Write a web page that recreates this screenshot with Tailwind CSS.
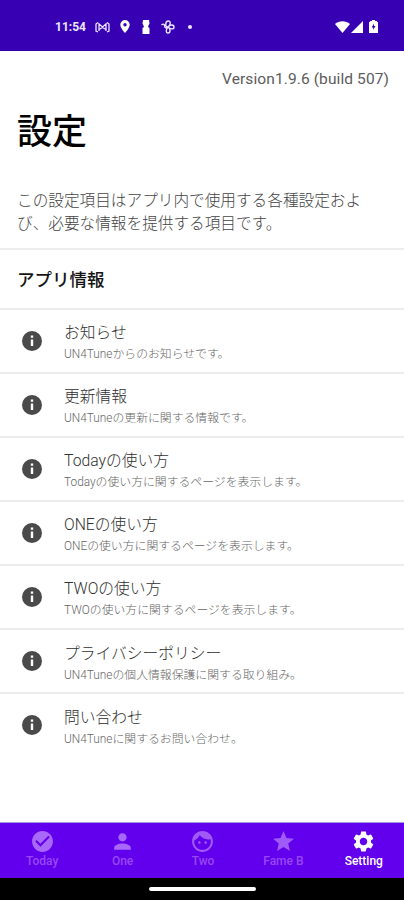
<!DOCTYPE html>
<html lang="ja">
<head>
    <meta charset="UTF-8">
    <meta name="viewport" content="width=device-width, initial-scale=1.0">
    <title>設定</title>
    <script src="https://cdn.jsdelivr.net/npm/@tailwindcss/browser@4"></script>
</head>
<body class="bg-white font-[Roboto,'Noto_Sans_CJK_JP',sans-serif]">
    <svg class="hidden">
        <symbol id="info" viewBox="0 0 24 24"><path d="M12 2a10 10 0 1 0 0 20 10 10 0 0 0 0-20zm1.200 15h-2.400v-6.400h2.400V17zm0-8.200h-2.400V6.600h2.400v2.200z"/></symbol>
    </svg>
    <div class="w-full h-[900px] flex flex-col overflow-hidden">
        <!-- Status bar -->
        <header class="h-[51px] shrink-0 bg-[#3700b3] text-[#ece6ff] flex items-center pl-[55px] pr-[26px] pt-[2px]">
            <span class="w-[32px] text-[12px] leading-none font-bold whitespace-nowrap">11:54</span>
            <svg class="w-[15px] h-3 ml-[8px]" viewBox="0 0 15 12" fill="none" stroke="currentColor" stroke-width="1.3"><path d="M3 1.500 1 3v7l2 1M12 1.500 14 3v7l-2 1M4 10V3l3.500 3L11 3v7M4 8.500l3.500-2 3.500 2"/></svg>
            <svg class="w-[10px] h-[13px] ml-[10px]" viewBox="0 0 10 13" fill="white"><path fill-rule="evenodd" d="M5 0a4.700 4.700 0 0 0-4.700 4.700C.3 8 5 13 5 13s4.700-5 4.700-8.300A4.700 4.700 0 0 0 5 0zm0 3a1.700 1.700 0 1 1 0 3.400A1.700 1.700 0 0 1 5 3z"/></svg>
            <svg class="w-[8px] h-[14px] ml-[12px]" viewBox="0 0 8 14" fill="white"><path d="M1 0h6l.5 3.500L6.500 5.500 6 7l1.500 1v6h-7V8L2 7l-.5-1.500L.5 3.500z"/></svg>
            <svg class="w-[14px] h-[14px] ml-[11px]" viewBox="0 0 14 14" fill="none" stroke="currentColor" stroke-width="1.400"><path d="M7 7C4 7.500 4 1.500 7 1s3 4 0 6zM7 7c2-3 6-2.500 6 0s-3.500 2.500-6 0zM7 7c3 2 2.500 6 0 6s-2-4 0-6zM7 7C5 9 3.500 7.500 3.500 5.500S1.500 4 .5 5"/></svg>
            <span class="size-1 rounded-full bg-[#ece6ff] ml-[13px]"></span>
            <svg class="w-[15px] h-[12px] ml-auto" viewBox="0 0 15 12" fill="white"><path d="M7.500 12 0 3C4 -.7 11-.7 15 3z"/></svg>
            <svg class="w-[12px] h-[12px] ml-[1px]" viewBox="0 0 12 12" fill="white"><path d="M12 0v12H0z"/></svg>
            <svg class="w-[9px] h-[13px] ml-[6px]" viewBox="0 0 9 13"><path fill="white" d="M3 0h3v1h1.500L9 2.500V13H0V2.500L1.500 1H3z"/><path fill="#3700b3" d="M5 3.500 2.700 7.500h1.500V10l2.300-3.900H5z"/></svg>
        </header>

        <main class="flex-1">
            <p class="mt-[17px] pr-[15px] text-right text-[15.500px] leading-[22px] tracking-[0.1px] text-[#5c5c5c]">Version1.9.6 (build 507)</p>
            <h1 class="mt-[18px] pl-[17px] text-[35px] leading-[50px] font-medium text-black">設定</h1>
            <p class="mt-[31px] pl-[17px] text-[15.650px] leading-[23px] font-light text-[#444]">この設定項目はアプリ内で使用する各種設定およ<br>び、必要な情報を提供する項目です。</p>
            <h2 class="mt-[13px] h-[61.500px] border-y-2 border-[#ececec] pl-[17px] pt-[3px] flex items-center text-[17.500px] font-medium text-[#151515]">アプリ情報</h2>

            <ul class="text-[15.750px] font-light text-[#303030] [&>li]:h-[64.1px] [&>li]:border-b-2 [&>li]:border-[#ececec] [&>li:last-child]:border-transparent">
                <li class="flex items-center pl-[20px]">
                    <svg class="size-6 mr-[20px] fill-[#4a4a4a]"><use href="#info"/></svg>
                    <div class="pt-[4px]">
                        <p class="leading-[23px]">お知らせ</p>
                        <p class="text-[11.850px] leading-[20px] text-[#666]">UN4Tuneからのお知らせです。</p>
                    </div>
                </li>
                <li class="flex items-center pl-[20px]">
                    <svg class="size-6 mr-[20px] fill-[#4a4a4a]"><use href="#info"/></svg>
                    <div class="pt-[4px]">
                        <p class="leading-[23px]">更新情報</p>
                        <p class="text-[11.850px] leading-[20px] text-[#666]">UN4Tuneの更新に関する情報です。</p>
                    </div>
                </li>
                <li class="flex items-center pl-[20px]">
                    <svg class="size-6 mr-[20px] fill-[#4a4a4a]"><use href="#info"/></svg>
                    <div class="pt-[4px]">
                        <p class="leading-[23px]">Todayの使い方</p>
                        <p class="text-[11.850px] leading-[20px] text-[#666]">Todayの使い方に関するページを表示します。</p>
                    </div>
                </li>
                <li class="flex items-center pl-[20px]">
                    <svg class="size-6 mr-[20px] fill-[#4a4a4a]"><use href="#info"/></svg>
                    <div class="pt-[4px]">
                        <p class="leading-[23px]">ONEの使い方</p>
                        <p class="text-[11.850px] leading-[20px] text-[#666]">ONEの使い方に関するページを表示します。</p>
                    </div>
                </li>
                <li class="flex items-center pl-[20px]">
                    <svg class="size-6 mr-[20px] fill-[#4a4a4a]"><use href="#info"/></svg>
                    <div class="pt-[4px]">
                        <p class="leading-[23px]">TWOの使い方</p>
                        <p class="text-[11.850px] leading-[20px] text-[#666]">TWOの使い方に関するページを表示します。</p>
                    </div>
                </li>
                <li class="flex items-center pl-[20px]">
                    <svg class="size-6 mr-[20px] fill-[#4a4a4a]"><use href="#info"/></svg>
                    <div class="pt-[4px]">
                        <p class="leading-[23px]">プライバシーポリシー</p>
                        <p class="text-[11.850px] leading-[20px] text-[#666]">UN4Tuneの個人情報保護に関する取り組み。</p>
                    </div>
                </li>
                <li class="flex items-center pl-[20px]">
                    <svg class="size-6 mr-[20px] fill-[#4a4a4a]"><use href="#info"/></svg>
                    <div class="pt-[4px]">
                        <p class="leading-[23px]">問い合わせ</p>
                        <p class="text-[11.850px] leading-[20px] text-[#666]">UN4Tuneに関するお問い合わせ。</p>
                    </div>
                </li>
            </ul>
        </main>

        <!-- Bottom navigation -->
        <nav class="h-[56px] shrink-0 bg-[#6200ee] border-t border-[#a898dc] grid grid-cols-5 pl-[2px] text-[12px] leading-[14px] font-medium text-[#9747f5]">
            <a class="flex flex-col items-center pt-[6px]">
                <svg class="size-[25px] fill-[#a868fa]" viewBox="0 0 24 24"><path d="M12 2C6.480 2 2 6.480 2 12s4.480 10 10 10 10-4.480 10-10S17.520 2 12 2zm-2 15-5-5 1.410-1.410L10 14.170l7.590-7.590L19 8l-9 9z"/></svg>
                Today
            </a>
            <a class="flex flex-col items-center pt-[6px]">
                <svg class="size-[25px] fill-[#a868fa]" viewBox="0 0 24 24"><path d="M12 12c2.210 0 4-1.790 4-4s-1.790-4-4-4-4 1.790-4 4 1.790 4 4 4zm0 2c-2.670 0-8 1.340-8 4v2h16v-2c0-2.660-5.330-4-8-4z"/></svg>
                One
            </a>
            <a class="flex flex-col items-center pt-[6px]">
                <svg class="size-[25px] fill-[#a05af8]" viewBox="0 0 24 24"><path d="M9 11.750c-.69 0-1.250.56-1.250 1.250s.56 1.250 1.250 1.250 1.250-.56 1.250-1.250-.56-1.250-1.250-1.250zm6 0c-.69 0-1.250.56-1.250 1.250s.56 1.250 1.250 1.250 1.250-.56 1.250-1.250-.56-1.250-1.250-1.250zM12 2C6.480 2 2 6.480 2 12s4.480 10 10 10 10-4.480 10-10S17.520 2 12 2zm0 18c-4.410 0-8-3.590-8-8 0-.29.02-.58.05-.86 2.360-1.050 4.230-2.980 5.210-5.370C11.070 8.330 14.050 10 17.420 10c.78 0 1.530-.09 2.250-.26.21.71.33 1.470.33 2.260 0 4.410-3.590 8-8 8z"/></svg>
                Two
            </a>
            <a class="flex flex-col items-center pt-[6px]">
                <svg class="size-[25px] fill-[#a05af8]" viewBox="0 0 24 24"><path d="M12 17.270 18.180 21l-1.640-7.030L22 9.240l-7.190-.61L12 2 9.190 8.630 2 9.240l5.460 4.730L5.820 21z"/></svg>
                Fame B
            </a>
            <a class="flex flex-col items-center pt-[6px] text-white">
                <svg class="size-[25px] fill-white" viewBox="0 0 24 24"><path d="M19.140 12.940c.04-.3.06-.61.06-.94 0-.32-.02-.64-.07-.94l2.030-1.580c.18-.14.23-.41.12-.61l-1.920-3.320c-.12-.22-.37-.29-.59-.22l-2.390.96c-.5-.38-1.030-.7-1.620-.94l-.36-2.540c-.04-.24-.24-.41-.48-.41h-3.840c-.24 0-.43.17-.47.41l-.36 2.540c-.59.24-1.130.57-1.620.94l-2.390-.96c-.22-.08-.47 0-.59.22L2.740 8.870c-.12.21-.08.47.12.61l2.030 1.580c-.05.3-.09.63-.09.94s.02.64.07.94l-2.030 1.580c-.18.14-.23.41-.12.61l1.920 3.320c.12.22.37.29.59.22l2.390-.96c.5.38 1.030.7 1.620.94l.36 2.540c.05.24.24.41.48.41h3.840c.24 0 .44-.17.47-.41l.36-2.540c.59-.24 1.130-.56 1.620-.94l2.390.96c.22.08.47 0 .59-.22l1.920-3.320c.12-.22.07-.47-.12-.61l-2.010-1.580zM12 15.600c-1.980 0-3.600-1.620-3.600-3.600s1.620-3.600 3.600-3.600 3.600 1.620 3.600 3.600-1.620 3.600-3.600 3.600z"/></svg>
                Setting
            </a>
        </nav>
        <div class="h-[22px] shrink-0 bg-black flex items-center justify-center">
            <span class="w-[107px] h-1 rounded-full bg-white"></span>
        </div>
    </div>
</body>
</html>
